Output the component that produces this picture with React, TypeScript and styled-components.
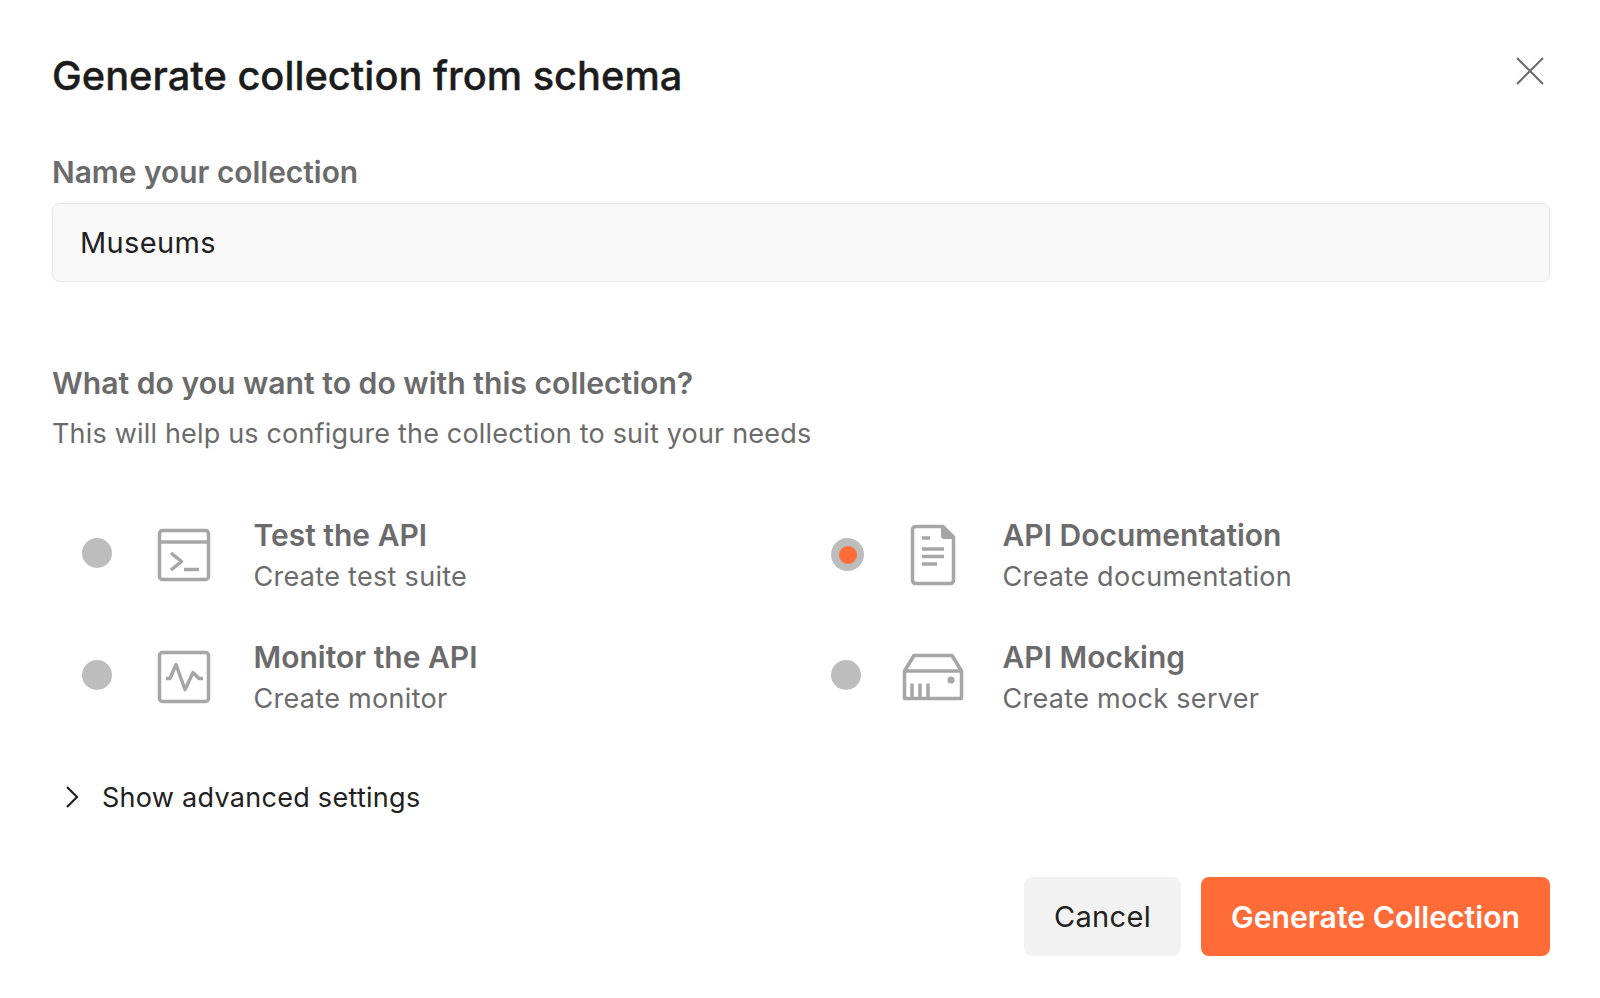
import { createGlobalStyle, styled } from 'styled-components'

const GlobalStyle = createGlobalStyle`
  html, body {
    margin: 0;
    padding: 0;
    background: #fff;
    font-family: Inter, 'Liberation Sans', sans-serif;
  }
`

const Dialog = styled.div`
  width: 1600px;
  height: 998px;
  box-sizing: border-box;
  padding: 47px 50px 0 52px;
  display: flex;
  flex-direction: column;
  overflow: hidden;
`

const Header = styled.div`
  display: flex;
  justify-content: space-between;
  align-items: flex-start;
  height: 58px;
`

const Title = styled.h1`
  margin: 0;
  font-size: 39.8px;
  line-height: 58px;
  font-weight: 500;
  -webkit-text-stroke: 0.35px #1c1c1c;
  color: #1c1c1c;
`

const Close = styled.svg`
  width: 28px;
  height: 28px;
  margin: 10px 6px 0 0;
`

const Label = styled.div`
  margin-top: 47px;
  font-size: 29.9px;
  line-height: 40px;
  font-weight: 600;
  color: #6b6b6b;
`

const Input = styled.div`
  margin-top: 11px;
  height: 79px;
  box-sizing: border-box;
  padding: 0 27px;
  display: flex;
  align-items: center;
  background: #f9f9f9;
  border: 1px solid #e6e6e6;
  border-radius: 8px;
  font-size: 29px;
  letter-spacing: 0.35px;
  color: #212121;
`

const Question = styled.div`
  margin-top: 81px;
  font-size: 30.15px;
  line-height: 40px;
  font-weight: 600;
  color: #6b6b6b;
`

const Hint = styled.div`
  margin-top: 11px;
  font-size: 27px;
  line-height: 40px;
  letter-spacing: 0.18px;
  color: #6b6b6b;
`

const Options = styled.div`
  margin-top: 41px;
  display: grid;
  grid-template-columns: 749px 1fr;
  grid-auto-rows: 122px;
`

const Option = styled.div`
  display: flex;
  align-items: center;
  padding-left: 30px;
`

const Radio = styled.span<{ $selected?: boolean }>`
  width: 30px;
  height: 30px;
  flex: none;
  margin-bottom: 7px;
  border-radius: 50%;
  background: #bdbdbd;
  display: flex;
  align-items: center;
  justify-content: center;

  ${({ $selected }) =>
    $selected &&
    `
    width: 33px;
    height: 33px;
    margin-right: -3px;
    margin-bottom: 3px;
    &::after {
      content: '';
      width: 18px;
      height: 18px;
      border-radius: 50%;
      background: #ff6c37;
    }
  `}
`

const IconSlot = styled.div`
  width: 56px;
  height: 62px;
  flex: none;
  margin: 0 41px 3px 44px;
  display: flex;
  align-items: center;
  justify-content: center;
`

const OptionIcon = styled.svg`
  display: block;
  overflow: visible;
  fill: none;
  stroke: #a6a6a6;
  stroke-width: 3.5;
  stroke-linejoin: round;
`

const OptionText = styled.div`
  display: flex;
  flex-direction: column;
  margin-left: 0.5px;
`

const OptionTitle = styled.div`
  font-size: 30px;
  line-height: 41px;
  font-weight: 600;
  color: #6b6b6b;
`

const OptionSub = styled.div`
  font-size: 27px;
  line-height: 41px;
  letter-spacing: 0.3px;
  color: #6b6b6b;
`

const Advanced = styled.div`
  margin-top: 38px;
  display: flex;
  align-items: center;
  height: 40px;
  font-size: 27px;
  letter-spacing: 0.28px;
  color: #212121;
`

const Chevron = styled.svg`
  width: 16px;
  height: 24px;
  margin: 0 22px 0 12px;
`

const Footer = styled.div`
  margin-top: 60px;
  display: flex;
  justify-content: flex-end;
  gap: 20px;
`

const Button = styled.button<{ $primary?: boolean }>`
  height: 79px;
  box-sizing: border-box;
  border: 0;
  border-radius: 8px;
  font-family: inherit;
  padding: 0 30px;
  font-size: ${({ $primary }) => ($primary ? '30.2px' : '29px')};
  letter-spacing: ${({ $primary }) => ($primary ? '0' : '0.35px')};
  font-weight: ${({ $primary }) => ($primary ? 600 : 400)};
  color: ${({ $primary }) => ($primary ? '#fff' : '#212121')};
  background: ${({ $primary }) => ($primary ? '#ff6c37' : '#f2f2f2')};
`

const options = [
  {
    title: 'Test the API',
    sub: 'Create test suite',
    icon: (
      <OptionIcon width="52" height="52" viewBox="0 0 52 52">
        <rect x="1.5" y="1.5" width="49" height="49" rx="3" />
        <path d="M1.5 13h49M13 24l10.5 8.5L13 41M26 40.5h15" />
      </OptionIcon>
    ),
  },
  {
    title: 'API Documentation',
    sub: 'Create documentation',
    selected: true,
    icon: (
      <OptionIcon width="44" height="60" viewBox="0 0 44 60">
        <path d="M32 1.5H5Q1.5 1.5 1.5 5V55Q1.5 58.5 5 58.5H39Q42.5 58.5 42.5 55V12Z" />
        <path d="M30 0L44 14H33Q30 14 30 11Z" fill="#a6a6a6" stroke="none" />
        <path d="M11 13h8M11 24h22M11 31.5h22M11 39h15" />
      </OptionIcon>
    ),
  },
  {
    title: 'Monitor the API',
    sub: 'Create monitor',
    icon: (
      <OptionIcon width="52" height="52" viewBox="0 0 52 52">
        <rect x="1.5" y="1.5" width="49" height="49" rx="3" />
        <path d="M8 27.5h4l6-14 9 25 8-17 6 6h4" />
      </OptionIcon>
    ),
  },
  {
    title: 'API Mocking',
    sub: 'Create mock server',
    icon: (
      <OptionIcon width="60" height="46" viewBox="0 0 60 46">
        <path d="M1.5 17L11 1.5H49L58.5 17V44.5H1.5ZM1.5 17H58.5M9 44V29.5M17 44V29.5M25 44V29.5" />
        <circle cx="48" cy="26" r="3.6" fill="#a6a6a6" stroke="none" />
      </OptionIcon>
    ),
  },
]

const App = () => {
  return (
    <>
      <GlobalStyle />
      <Dialog>
        <Header>
          <Title>Generate collection from schema</Title>
          <Close viewBox="0 0 28 28" fill="none" stroke="#6b6b6b" strokeWidth="2">
            <path d="M1 1l26 26M27 1L1 27" />
          </Close>
        </Header>
        <Label>Name your collection</Label>
        <Input>Museums</Input>
        <Question>What do you want to do with this collection?</Question>
        <Hint>This will help us configure the collection to suit your needs</Hint>
        <Options>
          {options.map((o) => (
            <Option key={o.title}>
              <Radio $selected={o.selected} />
              <IconSlot>{o.icon}</IconSlot>
              <OptionText>
                <OptionTitle>{o.title}</OptionTitle>
                <OptionSub>{o.sub}</OptionSub>
              </OptionText>
            </Option>
          ))}
        </Options>
        <Advanced>
          <Chevron viewBox="0 0 16 24" fill="none" stroke="#212121" strokeWidth="2.2">
            <path d="M3 2l10 10L3 22" />
          </Chevron>
          Show advanced settings
        </Advanced>
        <Footer>
          <Button>Cancel</Button>
          <Button $primary>Generate Collection</Button>
        </Footer>
      </Dialog>
    </>
  )
}

export default App
